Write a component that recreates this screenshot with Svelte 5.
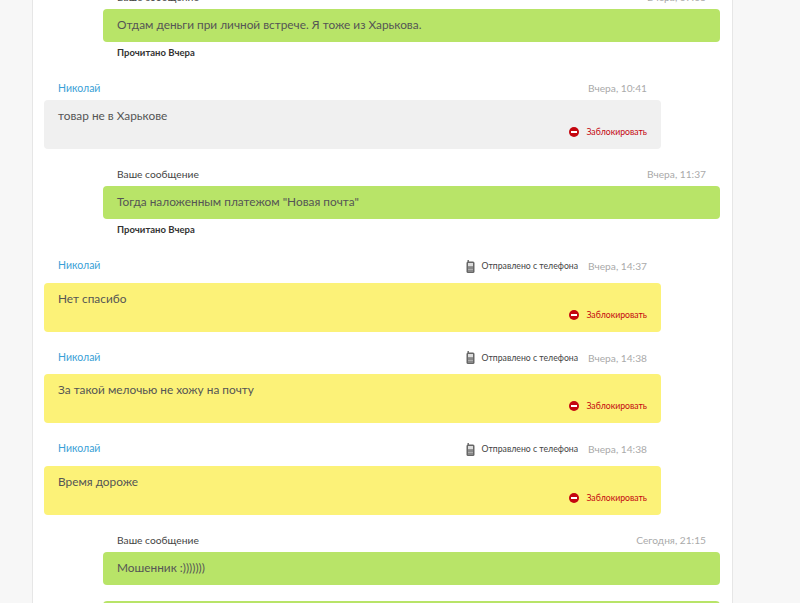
<script lang="ts">
  type Msg = {
    mine: boolean;
    name: string;
    time: string;
    text: string;
    phone?: boolean;
    read?: boolean;
  };

  const messages: Msg[] = [
    { mine: true, name: 'Ваше сообщение', time: 'Вчера, 07:03', text: 'Отдам деньги при личной встрече. Я тоже из Харькова.', read: true },
    { mine: false, name: 'Николай', time: 'Вчера, 10:41', text: 'товар не в Харькове' },
    { mine: true, name: 'Ваше сообщение', time: 'Вчера, 11:37', text: 'Тогда наложенным платежом "Новая почта"', read: true },
    { mine: false, name: 'Николай', time: 'Вчера, 14:37', text: 'Нет спасибо', phone: true },
    { mine: false, name: 'Николай', time: 'Вчера, 14:38', text: 'За такой мелочью не хожу на почту', phone: true },
    { mine: false, name: 'Николай', time: 'Вчера, 14:38', text: 'Время дороже', phone: true },
    { mine: true, name: 'Ваше сообщение', time: 'Сегодня, 21:15', text: 'Мошенник :)))))))' },
    { mine: true, name: '', time: '', text: '' },
  ];
</script>

<div class="page">
  <div class="card">
    {#each messages as m}
      <div class="msg" class:mine={m.mine} class:phone={m.phone}>
        {#if m.name}
          <div class="head">
            <span class="name">{m.name}</span>
            <span class="meta">
              {#if m.phone}
                <svg class="phone-icon" width="9" height="13" viewBox="0 0 9 13">
                  <rect x="0.5" y="1.5" width="8" height="11.5" rx="1.5" fill="#666" />
                  <rect x="1.5" y="0" width="1.4" height="2" fill="#666" />
                  <rect x="2" y="3" width="5" height="3.4" fill="#ddd" />
                  <path d="M2 8h5M2 9.5h5M2 11h5" stroke="#ccc" stroke-width="0.7" />
                </svg>
                <span class="sent">Отправлено с телефона</span>
              {/if}
              <span class="time">{m.time}</span>
            </span>
          </div>
        {/if}
        <div class="bubble" class:yellow={m.phone}>
          <p>{m.text}</p>
          {#if !m.mine}
            <div class="block">
              <svg width="10" height="10" viewBox="0 0 10 10">
                <circle cx="5" cy="5" r="5" fill="#c4060f" />
                <rect x="2" y="4" width="6" height="2" fill="#fff" />
              </svg>
              <span>Заблокировать</span>
            </div>
          {/if}
        </div>
        {#if m.read}
          <div class="read">Прочитано Вчера</div>
        {/if}
      </div>
    {/each}
  </div>
</div>

<style>
  :global(body) {
    margin: 0;
    background: #f7f7f7;
    overflow: hidden;
  }

  .page {
    height: 603px;
    overflow: hidden;
    font-family: Lato, "Open Sans", sans-serif;
  }

  /* page is scrolled: the first header sits above the fold */
  .card {
    box-sizing: border-box;
    width: 701px;
    margin-left: 32px;
    margin-top: -15.5px;
    padding: 0 11px;
    background: #fff;
    border: 1px solid #e6e6e6;
    border-width: 0 1px;
  }

  .msg {
    width: 617px;
    margin-bottom: 16px;
  }

  .msg.mine {
    margin-left: 59px;
  }

  .msg:not(.mine) {
    margin-bottom: 13px;
  }

  .msg:has(.read) {
    margin-bottom: 18.4px;
  }

  .head {
    display: flex;
    justify-content: space-between;
    align-items: center;
    height: 24px;
    padding: 0 14px;
    font-size: 10.5px;
    line-height: 24px;
  }

  .msg.phone .head {
    margin-bottom: 5.5px;
  }

  .name {
    color: #3a9fd6;
  }

  .msg.mine .name {
    font-size: 10.25px;
    color: #444;
  }

  .meta {
    display: flex;
    align-items: center;
  }

  .msg.phone .meta {
    padding-top: 2px;
  }

  .phone-icon {
    margin-right: 6px;
  }

  .sent {
    font-size: 8.7px;
    color: #444;
    margin-right: 10px;
  }

  .time {
    font-size: 10.2px;
    color: #aaa;
  }

  .bubble {
    box-sizing: border-box;
    min-height: 33px;
    padding: 8px 14px 0;
    background: #b8e468;
    border-radius: 4px;
    color: #555;
    font-size: 11.85px;
    line-height: 16px;
  }

  .msg:not(.mine) .bubble {
    height: 49px;
    background: #f0f0f0;
  }

  .msg:not(.mine) .bubble.yellow {
    background: #fcf278;
  }

  p {
    margin: 0;
  }

  .block {
    display: flex;
    justify-content: flex-end;
    align-items: center;
    gap: 7px;
    margin-top: 2px;
    font-size: 8.7px;
    line-height: 12px;
    color: #c4060f;
  }

  .read {
    padding: 5px 14px 0;
    font-size: 9.5px;
    line-height: 11px;
    font-weight: 700;
    color: #333;
  }
</style>
